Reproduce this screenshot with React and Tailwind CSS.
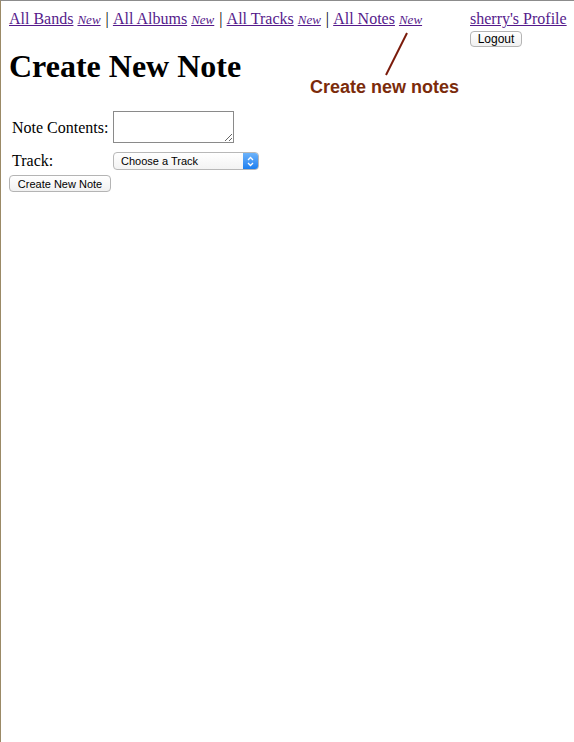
import React from "react";

const serif = { fontFamily: '"Liberation Serif", "Times New Roman", serif' };

function NavLink({ label }) {
  return (
    <>
      <a href="#" className="text-[#551a8b] underline text-[16px]">{label}</a>{" "}
      <a href="#" className="text-[#551a8b] underline italic text-[13px]">New</a>
    </>
  );
}

function Sep() {
  return <span className="text-black mx-[1px]">|</span>;
}

export default function App() {
  return (
    <div className="min-h-[742px] w-[574px] bg-white border-t border-t-[#8c8c8c] border-l border-l-[#9b8a66] relative" style={serif}>
      <div className="flex justify-between pl-[8px] pr-[6px] pt-[9px]">
        <div className="text-[16px] leading-[18px] text-black whitespace-nowrap">
          <NavLink label="All Bands" /> <Sep />{" "}
          <NavLink label="All Albums" /> <Sep />{" "}
          <NavLink label="All Tracks" /> <Sep />{" "}
          <NavLink label="All Notes" />
        </div>
        <div className="flex flex-col items-start w-[98px]">
          <a href="#" className="text-[#551a8b] underline text-[16px] leading-[18px] whitespace-nowrap">sherry's Profile</a>
          <button className="mt-[3px] h-[16px] w-[52px] rounded-[4px] border border-[#b4b4b4] bg-gradient-to-b from-white to-[#f1f1f1] text-[12px] leading-[14px] text-black flex items-center justify-center" style={{ fontFamily: '"Liberation Sans", Arial, sans-serif' }}>Logout</button>
        </div>
      </div>

      <h1 className="pl-[8px] mt-[1px] text-[32px] leading-[37px] font-bold text-black">Create New Note</h1>

      <div className="pl-[11px] mt-[26px] flex flex-col gap-[9px]">
        <div className="flex items-center">
          <span className="w-[101px] pt-[1px] text-[16px] leading-[18px] text-black">Note Contents:</span>
          <textarea className="w-[121px] h-[32px] border border-[#8a8a8a] bg-white resize block" />
        </div>
        <div className="flex items-center">
          <span className="w-[101px] text-[16px] leading-[18px] text-black">Track:</span>
          <div className="w-[146px] h-[18px] flex rounded-[4px] border border-[#b8b8b8] bg-gradient-to-b from-white to-[#f3f3f3] overflow-hidden" style={{ fontFamily: '"Liberation Sans", Arial, sans-serif' }}>
            <span className="flex-1 pl-[7px] text-[11px] leading-[16px] text-black">Choose a Track</span>
            <div className="w-[15px] h-full bg-gradient-to-b from-[#6cb3fa] to-[#1a7ff0] flex items-center justify-center">
              <svg width="7" height="11" viewBox="0 0 7 11">
                <path d="M1 4 L3.5 1.5 L6 4 M1 7 L3.5 9.5 L6 7" stroke="white" strokeWidth="1.3" fill="none" />
              </svg>
            </div>
          </div>
        </div>
      </div>
      <div className="pl-[8px] mt-[5px]">
        <button className="h-[17px] w-[102px] rounded-[4px] border border-[#b4b4b4] bg-gradient-to-b from-white to-[#f1f1f1] text-[11px] leading-[14px] text-black flex items-center justify-center" style={{ fontFamily: '"Liberation Sans", Arial, sans-serif' }}>Create New Note</button>
      </div>

      <svg className="absolute left-[382px] top-[30px]" width="28" height="48" viewBox="0 0 28 48">
        <line x1="24" y1="2" x2="3" y2="44" stroke="#7a1a0a" strokeWidth="2" />
      </svg>
      <div className="absolute left-[309px] top-[76px] text-[18px] leading-[21px] font-bold text-[#7b2b0a]" style={{ fontFamily: '"Liberation Sans", Arial, sans-serif' }}>Create new notes</div>
    </div>
  );
}
